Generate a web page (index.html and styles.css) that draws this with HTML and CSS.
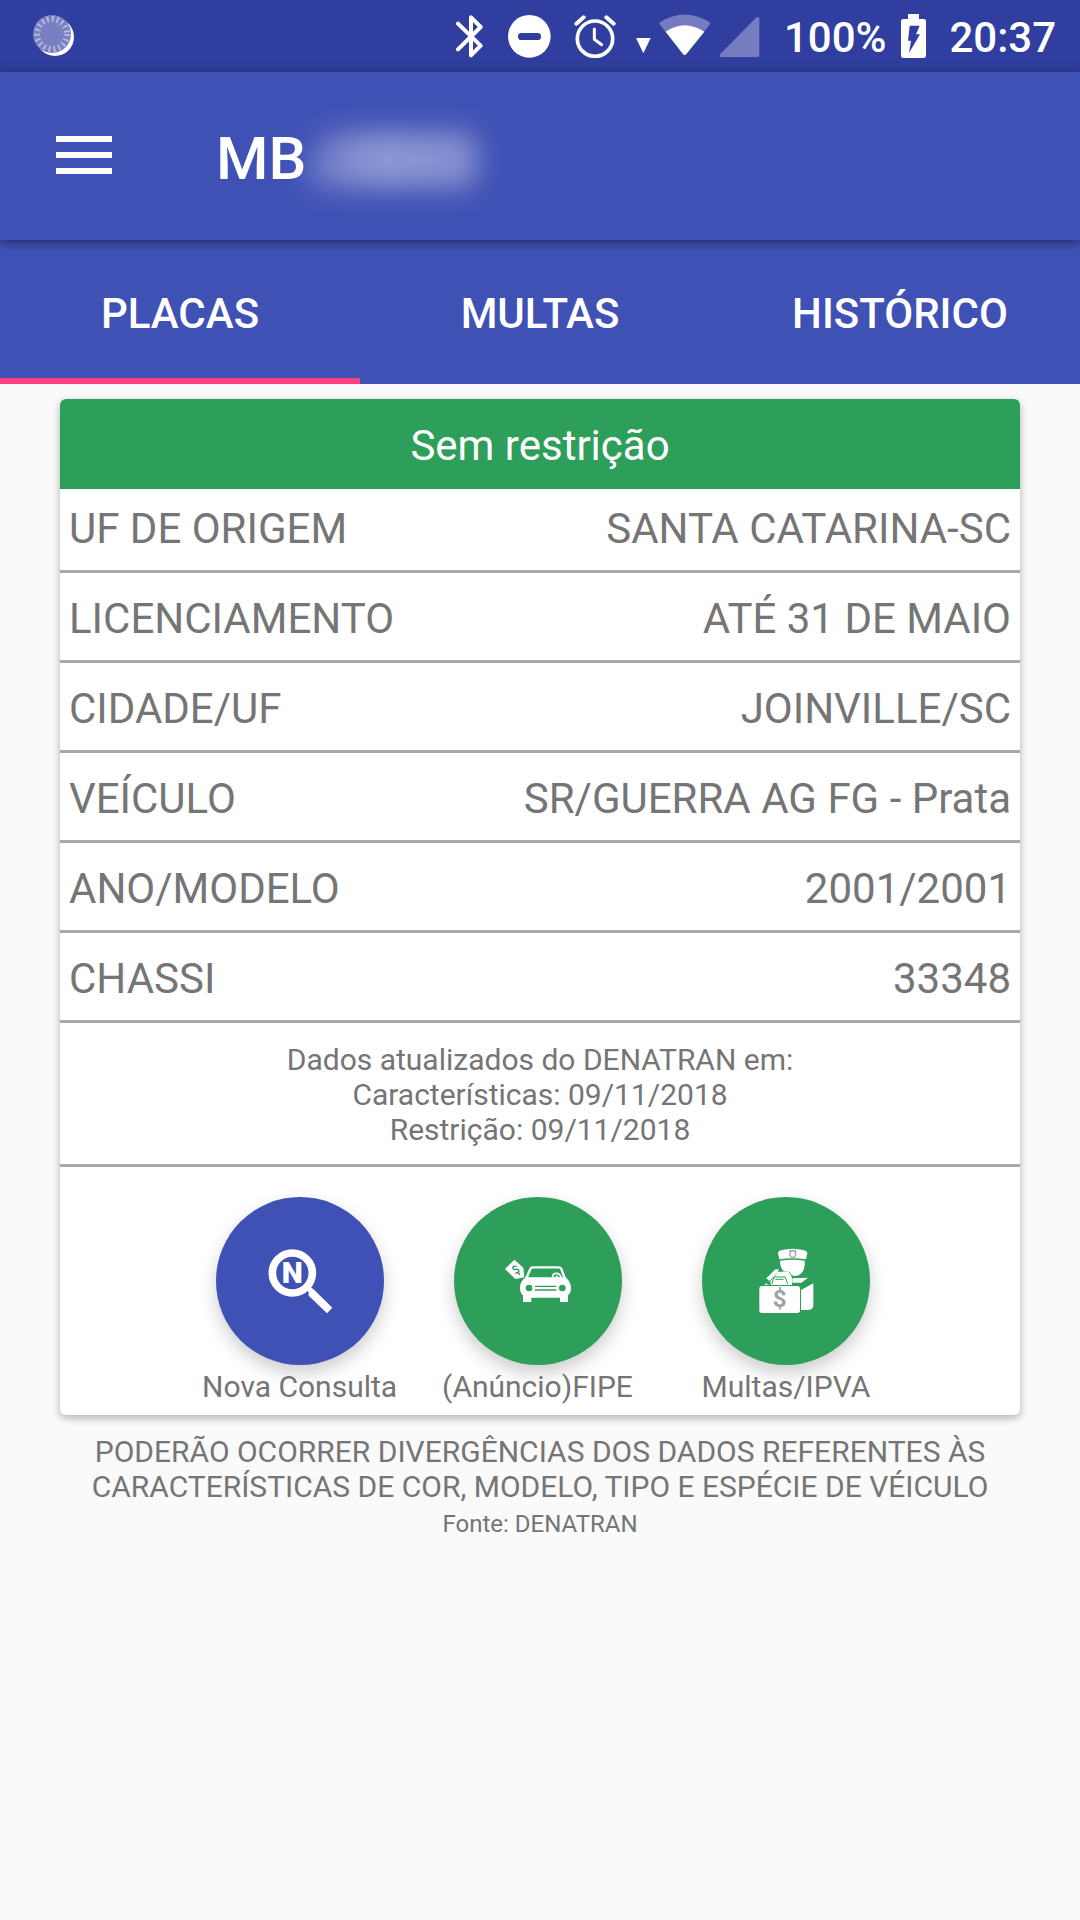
FILE: index.html
```html
<!DOCTYPE html>
<html lang="pt-BR">
<head>
    <meta charset="UTF-8">
    <meta name="viewport" content="width=device-width, initial-scale=1">
    <title>Consulta de Placas</title>
    <link rel="stylesheet" href="styles.css">
</head>
<body>
    <div class="status-bar">
        <svg class="loader" width="44" height="44" viewBox="0 0 44 44">
            <circle cx="23" cy="23" r="19" fill="#fff"/>
            <circle cx="20" cy="20" r="19" fill="#7880c2"/>
            <circle cx="20" cy="20" r="15" fill="none" stroke="#b4b8de" stroke-width="6" stroke-dasharray="2 3"/>
        </svg>
        <div class="status-icons">
            <svg width="27" height="44" viewBox="51 42 81 132">
                <path d="M57 71L125 137L96 166V52L125 81L57 148" fill="none" stroke="#fff" stroke-width="12" stroke-linecap="round" stroke-linejoin="round"/>
            </svg>
            <svg class="icon-dnd" width="43" height="44" viewBox="207 42 129 132">
                <circle cx="271" cy="109" r="64" fill="#fff"/>
                <rect x="237" y="99" width="69" height="21" rx="10" fill="#303f9f"/>
            </svg>
            <svg class="icon-alarm" width="42" height="44" viewBox="404 42 126 132">
                <circle cx="467" cy="116" r="53" fill="none" stroke="#fff" stroke-width="11"/>
                <path d="M465 87V118L487 134" fill="none" stroke="#fff" stroke-width="9" stroke-linecap="round" stroke-linejoin="round"/>
                <path d="M411 71L433 52M501 52L523 71" stroke="#fff" stroke-width="12" stroke-linecap="round"/>
            </svg>
            <svg class="icon-arrow" width="15" height="44" viewBox="589 42 45 132">
                <path d="M589 114H633L611 160Z" fill="#fff"/>
            </svg>
            <svg class="icon-wifi" width="52" height="44" viewBox="656 42 156 132">
                <path d="M658 73Q656 69 660 66Q733 21 807 66Q811 69 809 73L738 162Q733 168 728 162Z" fill="#757cc0"/>
                <path d="M676 95Q733 56 792 95L738 162Q733 168 728 162Z" fill="#fff"/>
            </svg>
            <svg class="icon-signal" width="41" height="44" viewBox="56 42 123 132">
                <path d="M60 162L167 53Q177 47 177 57V165Q177 171 171 171H63Q54 170 60 162Z" fill="#757cc0"/>
            </svg>
            <span class="battery-level">100%</span>
            <svg class="icon-battery" width="25" height="44" viewBox="603 42 75 132">
                <path d="M624 42H657V57H671Q678 57 678 64V167Q678 174 671 174H610Q603 174 603 167V64Q603 57 610 57H624Z" fill="#fff"/>
                <path d="M629 77H659L648 103H660L627 159L633 122H624Z" fill="#303f9f"/>
            </svg>
            <span class="clock">20:37</span>
        </div>
    </div>

    <header class="app-bar">
        <button class="menu-button" type="button" aria-label="Abrir menu">
            <svg width="56" height="38" viewBox="0 0 56 38">
                <path d="M0 3H56M0 19H56M0 35H56" stroke="#fff" stroke-width="6"/>
            </svg>
        </button>
        <h1 class="title">MB</h1>
        <span class="plate-hidden"></span>
    </header>

    <nav class="tabs">
        <button class="tab active" type="button">PLACAS</button>
        <button class="tab" type="button">MULTAS</button>
        <button class="tab" type="button">HISTÓRICO</button>
    </nav>

    <main class="container">
        <section class="card">
            <h2 class="card-title">Sem restrição</h2>
            <table class="info">
                <tr><th scope="row">UF DE ORIGEM</th><td>SANTA CATARINA-SC</td></tr>
                <tr><th scope="row">LICENCIAMENTO</th><td>ATÉ 31 DE MAIO</td></tr>
                <tr><th scope="row">CIDADE/UF</th><td>JOINVILLE/SC</td></tr>
                <tr><th scope="row">VEÍCULO</th><td>SR/GUERRA AG FG - Prata</td></tr>
                <tr><th scope="row">ANO/MODELO</th><td>2001/2001</td></tr>
                <tr><th scope="row">CHASSI</th><td>33348</td></tr>
            </table>
            <p class="updated">
                Dados atualizados do DENATRAN em:<br>
                Características: 09/11/2018<br>
                Restrição: 09/11/2018
            </p>
            <div class="actions">
                <div class="action">
                    <button class="fab fab-blue" id="nova" type="button" aria-labelledby="nova-label">
                        <svg width="72" height="72" viewBox="192 195 216 216">
                            <circle cx="277" cy="279" r="60" fill="none" stroke="#fff" stroke-width="23"/>
                            <path d="M318 328L328 318L343 330L397 383L381 400L326 347V336Z" fill="#fff"/>
                            <text class="lens-letter" x="277" y="310">N</text>
                        </svg>
                    </button>
                    <label id="nova-label" for="nova">Nova Consulta</label>
                </div>
                <div class="action">
                    <button class="fab" id="fipe" type="button" aria-labelledby="fipe-label">
                        <svg width="72" height="72" viewBox="189 195 216 216">
                            <!-- etiqueta de preço -->
                            <path d="M198 267L226 239L253 263L256 292L229 297Z" fill="#fff"/>
                            <path d="M233 259Q225 257 222 263Q221 269 230 268Q240 267 240 273Q239 280 229 279M221 258L226 262M237 278L243 284" fill="none" stroke="#2e9f5b" stroke-width="4"/>
                            <!-- carro -->
                            <path d="M261 297L274 267Q276 262 282 262H358Q365 262 367 267L378 297" fill="none" stroke="#fff" stroke-width="7"/>
                            <path d="M341 294Q339 280 352 280Q363 280 367 294" fill="none" stroke="#fff" stroke-width="5"/>
                            <path d="M346 294L353 286L361 294Z" fill="#fff"/>
                            <path d="M260 292H380Q396 307 396 324Q396 340 387 346V366H363V353H277V366H252V346Q243 340 243 324Q243 304 260 292Z" fill="#fff"/>
                            <circle cx="270" cy="324" r="10" fill="#2e9f5b"/>
                            <circle cx="370" cy="324" r="10" fill="#2e9f5b"/>
                            <path d="M288 319H352M288 330H352" stroke="#2e9f5b" stroke-width="4"/>
                        </svg>
                    </button>
                    <label id="fipe-label" for="fipe">(Anúncio)FIPE</label>
                </div>
                <div class="action action-last">
                    <button class="fab" id="multas" type="button" aria-labelledby="multas-label">
                        <svg width="72" height="72" viewBox="180 195 216 216">
                            <!-- quepe e rosto -->
                            <path d="M264 220Q264 213 273 211Q307 202 343 211Q352 214 352 220L348 238Q308 231 268 238Z" fill="#fff"/>
                            <path d="M300 212L304 214L308 211L312 214L317 212Q315 219 317 225Q315 232 308 233Q301 232 299 225Q302 219 300 212Z" fill="none" stroke="#9aa5ab" stroke-width="4"/>
                            <path d="M270 242Q308 236 344 242V257Q340 286 315 288Q303 288 300 276L282 273Q270 266 270 242Z" fill="#fff"/>
                            <!-- mão e braço -->
                            <path d="M229 295L256 268L266 268L264 277L238 303Z" fill="#fff"/>
                            <path d="M241 304L265 276L291 274Q300 277 306 293V315H243Z" fill="#fff"/>
                            <path d="M246 312L252 291H286L293 312M256 298H281" fill="none" stroke="#2e9f5b" stroke-width="3"/>
                            <path d="M307 295L354 293L334 308H307ZM223 314L228 310L237 314Z" fill="#fff"/>
                            <path d="M333 330L370 310V378Q368 389 356 390H333Z" fill="#fff"/>
                            <!-- maleta -->
                            <rect x="208" y="318" width="122" height="81" rx="8" fill="#fff"/>
                            <text class="case-sign" x="269" y="382">$</text>
                        </svg>
                    </button>
                    <label id="multas-label" for="multas">Multas/IPVA</label>
                </div>
            </div>
        </section>
        <p class="notice">PODERÃO OCORRER DIVERGÊNCIAS DOS DADOS REFERENTES ÀS CARACTERÍSTICAS DE COR, MODELO, TIPO E ESPÉCIE DE VÉICULO</p>
        <p class="source">Fonte: DENATRAN</p>
    </main>
</body>
</html>
```
FILE: styles.css
```css
* {
    box-sizing: border-box;
}
body {
    margin: 0;
    font-family: Roboto, "Liberation Sans", sans-serif;
    font-size: 30px;
    line-height: 35px;
    color: #757575;
    background-color: #fafafa;
}
h1, h2, p {
    margin: 0;
    font-weight: 400;
}
svg {
    display: block;
}
button {
    border: 0;
    padding: 0;
    font-family: inherit;
    cursor: pointer;
}

/* barra de status */
.status-bar {
    display: flex;
    justify-content: space-between;
    align-items: center;
    height: 72px;
    padding: 0 24px 0 32px;
    background-color: #303f9f;
    color: #fff;
    font-size: 42px;
    font-weight: 500;
}
.status-icons {
    display: flex;
    align-items: center;
}
.icon-dnd {
    margin-left: 25px;
}
.icon-alarm {
    margin-left: 23px;
}
.icon-arrow {
    margin-left: 20px;
}
.icon-wifi {
    margin-left: 8px;
}
.icon-signal {
    margin-left: 8px;
}
.battery-level {
    margin-left: 24px;
    padding-top: 2px;
}
.icon-battery {
    margin-left: 15px;
}
.clock {
    margin-left: 23px;
    padding-top: 2px;
}

/* cabeçalho */
.app-bar {
    position: relative;
    z-index: 1;
    display: flex;
    align-items: center;
    height: 168px;
    padding: 0 56px 2px;
    background-color: #3f51b5;
    box-shadow: 0 2px 10px rgba(0, 0, 0, 0.5);
}
.menu-button {
    background: none;
}
.title {
    margin-left: 104px;
    padding-top: 8px;
    color: #fff;
    font-size: 60px;
    font-weight: 500;
    line-height: 70px;
}
.plate-hidden {
    width: 172px;
    height: 56px;
    margin-top: 10px;
    border-radius: 40px 16px 16px 16px;
    background: linear-gradient(to right, rgba(255, 255, 255, 0.2), rgba(255, 255, 255, 0.42) 40%, rgba(255, 255, 255, 0.36));
    filter: blur(14px);
}

.tabs {
    display: flex;
    background-color: #3f51b5;
}
.tab {
    flex: 1;
    height: 144px;
    padding-top: 8px;
    border-bottom: 6px solid transparent;
    background: none;
    color: #fff;
    font-size: 42px;
    font-weight: 500;
}
.tab.active {
    border-bottom-color: #ff4081;
}

/* cartão */
.container {
    padding: 15px 60px;
    text-align: center;
}
.card {
    overflow: hidden;
    border-radius: 6px;
    background-color: #fff;
    box-shadow: 0 3px 8px rgba(0, 0, 0, 0.3);
}
.card-title {
    padding: 22px 0 18px;
    background-color: #2e9f5b;
    color: #fff;
    font-size: 42px;
    line-height: 50px;
}
.info {
    width: 100%;
    border-collapse: collapse;
    font-size: 42px;
    line-height: 50px;
}
.info tr {
    border-bottom: 3px solid #a9a9a9;
}
.info th,
.info td {
    padding: 21px 9px 16px;
    font-weight: 400;
    text-align: left;
}
.info td {
    text-align: right;
}
.info tr:first-child th,
.info tr:first-child td {
    padding-top: 15px;
}
.updated {
    padding: 19px 0 17px;
    border-bottom: 3px solid #a9a9a9;
}
.actions {
    display: flex;
    justify-content: center;
    gap: 45px;
    padding: 30px 0 11px 16px;
}
.action {
    display: flex;
    flex-direction: column;
    align-items: center;
    gap: 4px;
}
.action-last {
    min-width: 216px;
}
.fab {
    display: flex;
    justify-content: center;
    align-items: center;
    width: 168px;
    height: 168px;
    border-radius: 50%;
    background-color: #2e9f5b;
    box-shadow: 0 8px 18px rgba(0, 0, 0, 0.2);
}
.fab-blue {
    background-color: #3f51b5;
}
.lens-letter {
    fill: #fff;
    font-size: 90px;
    font-weight: 900;
    text-anchor: middle;
}
.case-sign {
    fill: #9aa5ab;
    font-size: 72px;
    font-weight: 700;
    text-anchor: middle;
}

.notice {
    margin: 19px -40px 6px;
    padding: 0 60px;
}
.source {
    font-size: 24px;
    line-height: 28px;
}
```
